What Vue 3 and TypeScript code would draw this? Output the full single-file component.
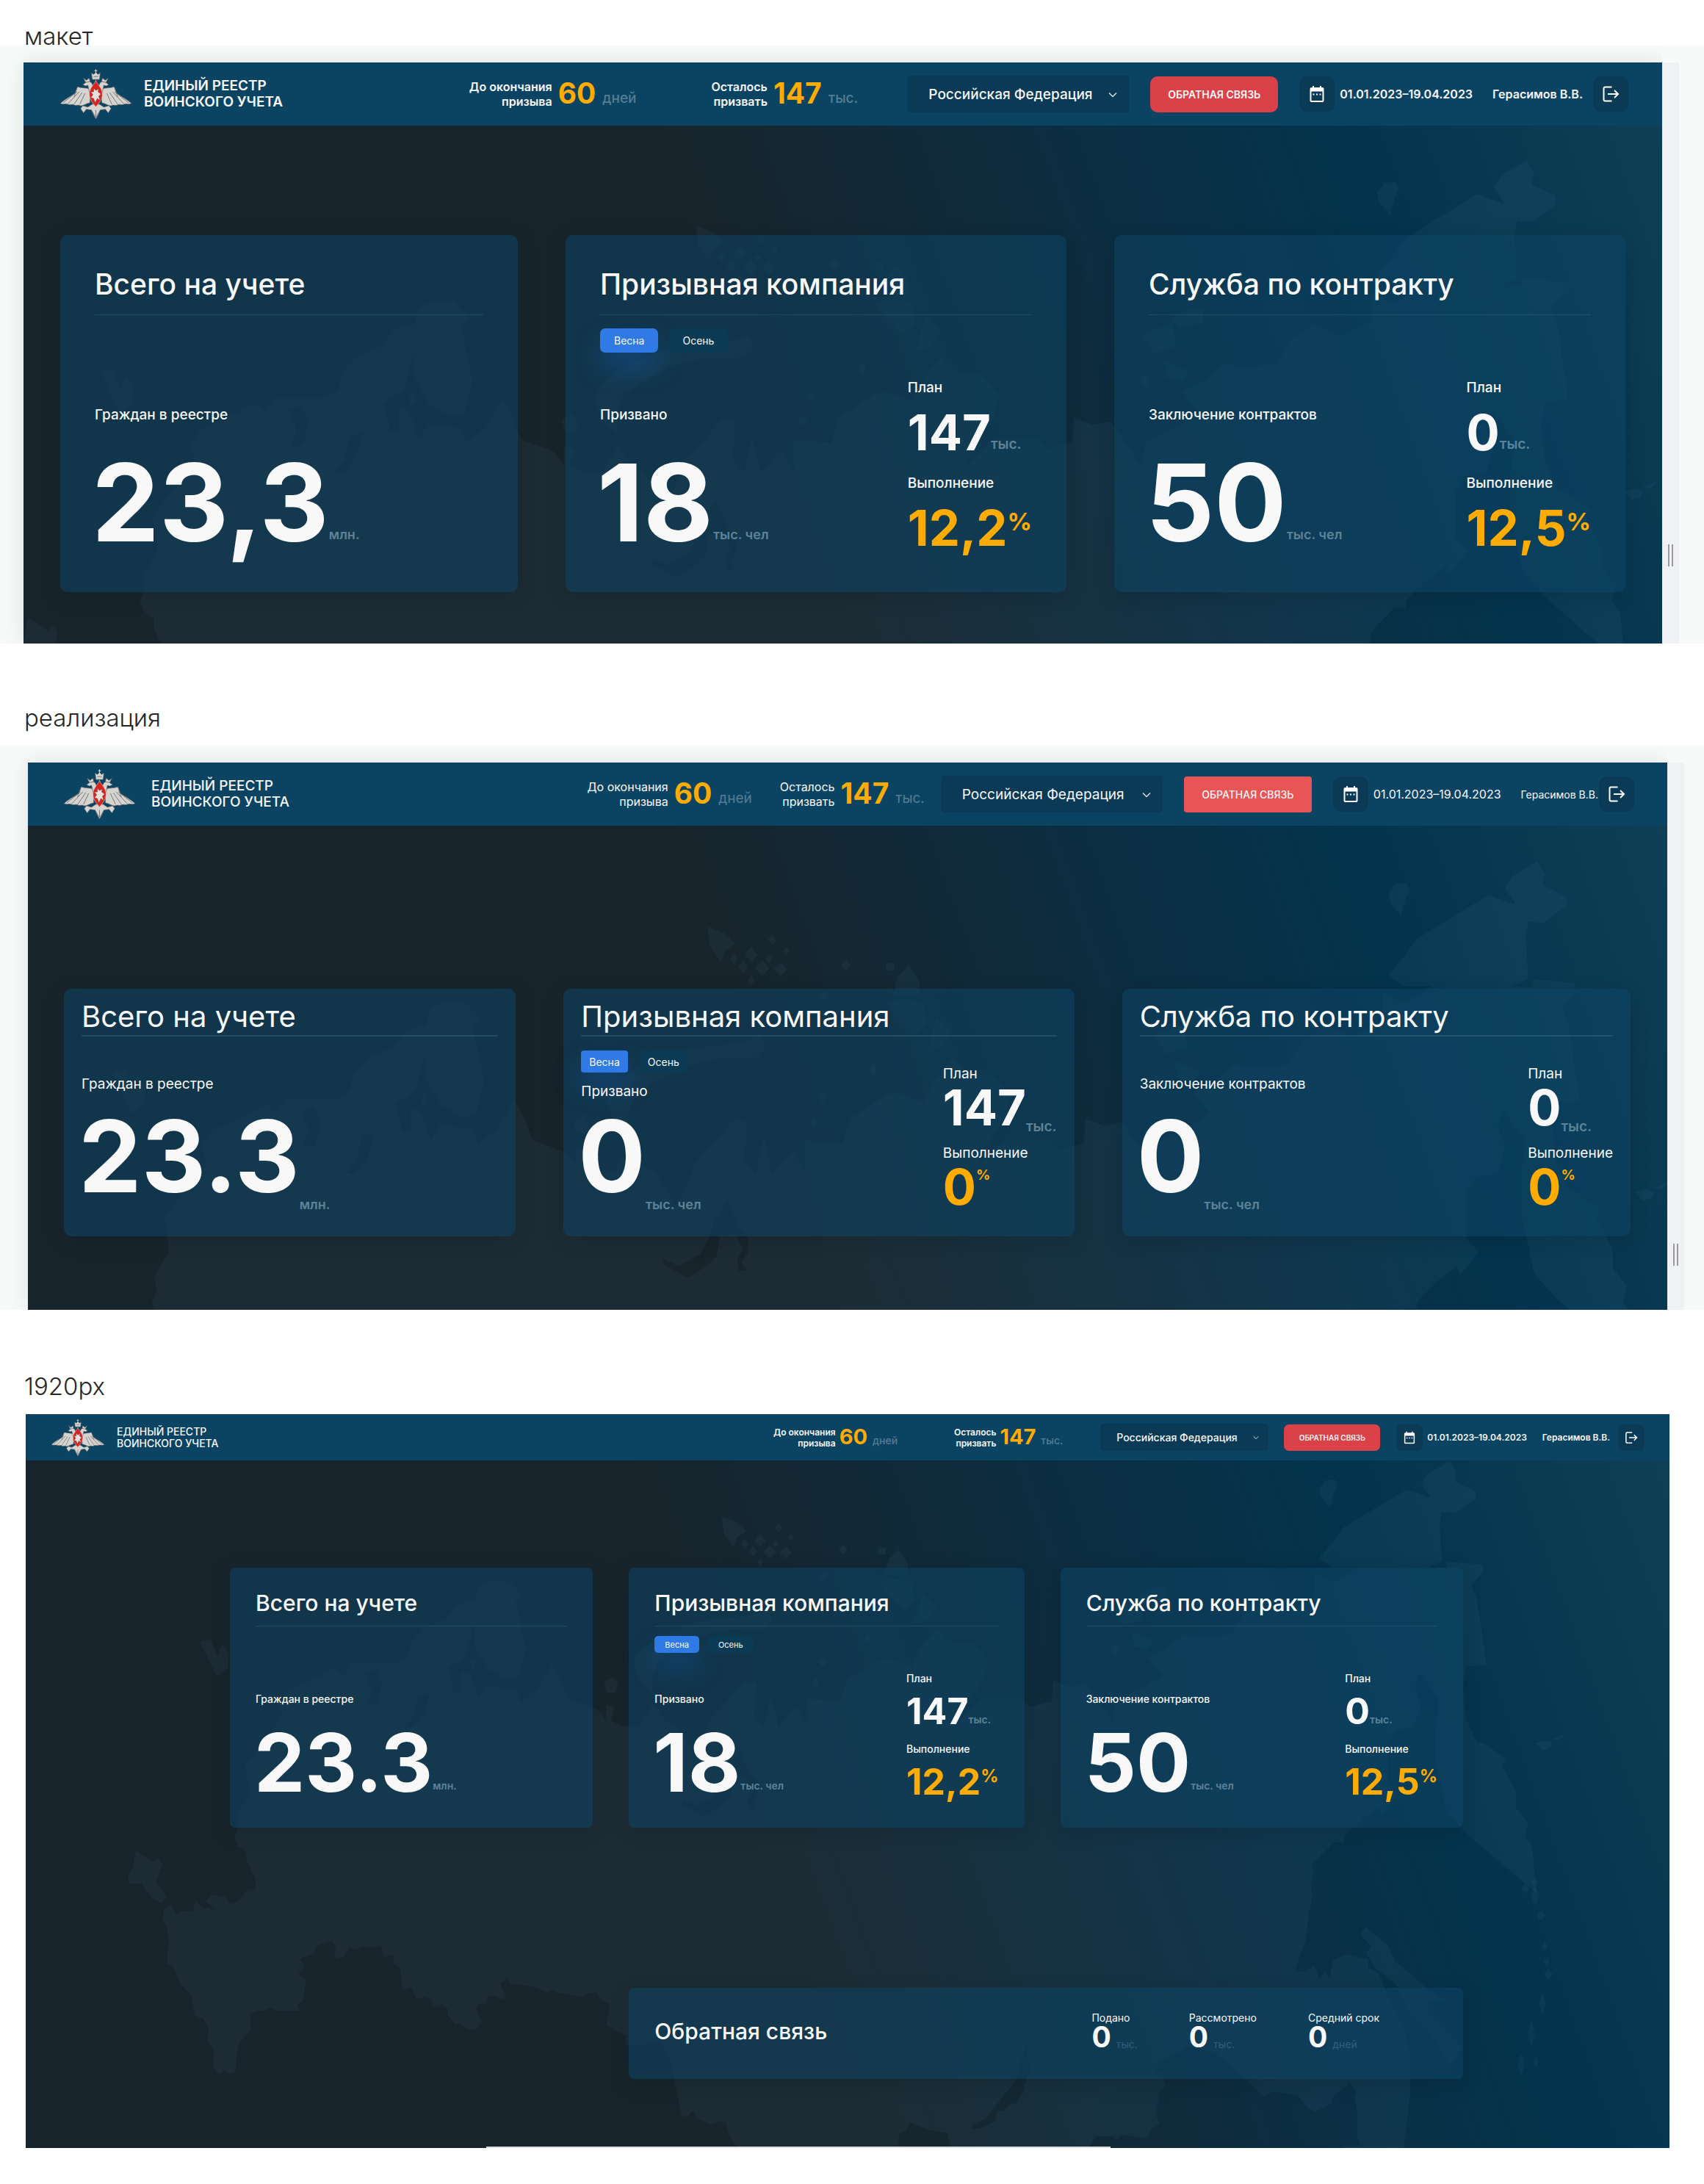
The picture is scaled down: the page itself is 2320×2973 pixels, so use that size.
<script setup lang="ts">
import { ref } from 'vue'

interface Metric { label: string; value: string; unit: string; accent?: boolean }
interface Card { title: string; tabs: boolean; main: Metric; side: Metric[] }
interface Board {
  id: string
  caption: string
  framed: boolean
  mapBox: string
  cards: Card[]
  feedback: Metric[]
}

function makeCards(total: string, drafted: string, contracts: string, done: [string, string]): Card[] {
  return [
    { title: 'Всего на учете', tabs: false, main: { label: 'Граждан в реестре', value: total, unit: 'млн.' }, side: [] },
    {
      title: 'Призывная компания',
      tabs: true,
      main: { label: 'Призвано', value: drafted, unit: 'тыс. чел' },
      side: [
        { label: 'План', value: '147', unit: 'тыс.' },
        { label: 'Выполнение', value: done[0], unit: '%', accent: true },
      ],
    },
    {
      title: 'Служба по контракту',
      tabs: false,
      main: { label: 'Заключение контрактов', value: contracts, unit: 'тыс. чел' },
      side: [
        { label: 'План', value: '0', unit: 'тыс.' },
        { label: 'Выполнение', value: done[1], unit: '%', accent: true },
      ],
    },
  ]
}

const boards: Board[] = [
  { id: 'mockup', caption: 'макет', framed: true, mapBox: '180 1874 1956 675', cards: makeCards('23,3', '18', '50', ['12,2', '12,5']), feedback: [] },
  { id: 'build', caption: 'реализация', framed: true, mapBox: '171 1873 1958 636', cards: makeCards('23.3', '0', '0', ['0', '0']), feedback: [] },
  {
    id: 'wide',
    caption: '1920px',
    framed: false,
    mapBox: '35 1924 2238 1000',
    cards: makeCards('23.3', '18', '50', ['12,2', '12,5']),
    feedback: [
      { label: 'Подано', value: '0', unit: 'тыс.' },
      { label: 'Рассмотрено', value: '0', unit: 'тыс.' },
      { label: 'Средний срок', value: '0', unit: 'дней' },
    ],
  },
]

const counters = [
  { first: 'До окончания', second: 'призыва', value: '60', unit: 'дней' },
  { first: 'Осталось', second: 'призвать', value: '147', unit: 'тыс.' },
]

const seasons = ['Весна', 'Осень']
const season = ref('Весна')

// Mainland outline followed by the inner gulfs and lakes, filled even-odd
const mainland =
  'M298 2824L290 2813 291 2793 283 2778 284 2762 277 2748 265 2743 261 2717 246 2700 235 2676 227 2673 230 2643 227 2622 221 2613 224 2598 232 2592 240 2605 246 2601 262 2602 266 2587 278 2599 283 2596 294 2600 280 2588 288 2579 306 2581 314 2592 323 2588 338 2572 348 2572 348 2557 336 2532 335 2520 324 2512 319 2500 325 2487 322 2470 340 2441 334 2401 365 2362 384 2335 378 2319 391 2300 423 2287 456 2270 468 2280 479 2264 540 2264 556 2254 559 2235 579 2215 605 2205 624 2183 647 2178 651 2159 670 2150 695 2153 712 2172 702 2178 716 2244 706 2283 689 2285 663 2270 647 2241 645 2212 634 2254 611 2270 618 2303 628 2300 628 2274 641 2280 652 2312 663 2294 702 2299 709 2316 731 2299 752 2265 764 2287 774 2312 813 2326 825 2341 825 2319 837 2324 832 2342 848 2349 871 2349 890 2318 903 2339 923 2352 945 2388 955 2371 968 2339 1014 2288 1030 2290 1027 2335 1040 2350 1050 2310 1060 2350 1085 2323 1100 2350 1098 2312 1144 2316 1153 2287 1182 2268 1198 2258 1215 2258 1241 2268 1252 2244 1275 2216 1297 2236 1323 2236 1345 2260 1338 2287 1315 2319 1301 2347 1338 2311 1389 2311 1404 2323 1432 2315 1434 2287 1456 2295 1478 2291 1515 2343 1519 2315 1559 2295 1582 2280 1563 2256 1589 2244 1611 2224 1637 2228 1678 2224 1693 2197 1722 2177 1752 2193 1789 2173 1789 2141 1815 2153 1848 2133 1815 2133 1795 2121 1815 2098 1830 2078 1915 2027 1948 2038 1935 2019 1944 2005 1974 1988 1983 2003 1980 2015 1996 2023 2009 2029 2009 2040 2002 2044 1981 2059 1963 2058 1960 2074 1963 2125 1944 2133 1968 2134 1970 2125 2018 2129 2020 2139 2003 2157 2011 2177 2024 2266 1996 2268 1992 2295 1996 2339 2011 2371 2022 2374 2051 2394 2044 2402 2064 2438 2064 2461 2081 2481 2076 2500 2086 2512 2092 2577 1996 2495 1970 2467 1955 2400 1955 2351 1959 2311 1933 2278 1926 2295 1935 2319 1926 2351 1900 2355 1889 2374 1889 2426 1904 2442 1881 2469 1878 2459 1855 2475 1830 2500 1830 2508 1817 2507 1787 2537 1789 2550 1784 2565 1787 2578 1781 2610 1778 2640 1763 2682 1776 2684 1789 2675 1796 2693 1804 2683 1810 2693 1815 2668 1833 2660 1863 2667 1863 2678 1878 2687 1889 2717 1911 2760 1920 2800 1920 2850 1911 2924 1828 2924 1830 2921 1853 2921 1848 2910 1848 2874 1844 2857 1846 2847 1838 2835 1815 2855 1811 2865 1789 2875 1778 2867 1767 2852 1748 2849 1733 2848 1720 2854 1693 2827 1654 2794 1619 2785 1580 2807 1571 2821 1582 2822 1587 2839 1578 2849 1574 2880 1579 2890 1567 2899 1562 2911 1528 2906 1520 2913 1514 2908 1493 2908 1481 2924 1295 2924 1290 2904 1264 2899 1238 2889 1236 2896 1230 2903 1224 2904 1223 2917 1228 2924 1005 2924 995 2912 988 2890 980 2888 968 2892 948 2883 944 2873 937 2880 928 2881 914 2810 899 2780 866 2785 851 2783 854 2772 840 2765 825 2755 829 2740 830 2727 819 2723 812 2712 803 2713 790 2718 762 2713 752 2709 746 2712 732 2706 714 2702 697 2701 690 2693 681 2700 688 2717 683 2722 673 2716 664 2718 662 2727 651 2728 648 2733 656 2753 646 2764 633 2760 627 2754 620 2755 609 2743 610 2735 601 2728 598 2732 590 2730 588 2722 577 2718 568 2721 559 2705 548 2709 547 2697 544 2677 535 2672 537 2663 531 2661 523 2665 518 2648 507 2651 492 2649 487 2653 475 2652 468 2663 459 2666 455 2660 457 2648 452 2642 436 2647 429 2651 429 2658 408 2666 415 2677 406 2686 417 2695 412 2725 405 2727 408 2737 379 2737 368 2733 359 2737 348 2737 341 2743 341 2763 326 2780 322 2800 321 2819 314 2823 306 2819Z' +
  'M930 2450L949 2458 974 2444 984 2427 991 2405 1007 2382 1020 2414 1031 2425 1031 2442 1023 2454 1030 2463 1020 2464 1018 2451 1025 2437 1015 2420 997 2423 994 2446 981 2459 959 2472 930 2456Z' +
  'M1398 2780L1402 2820 1395 2837 1393 2847 1382 2864 1373 2865 1366 2874 1358 2874 1355 2887 1334 2898 1323 2898 1324 2892 1343 2884 1363 2857 1382 2834 1389 2810Z' +
  'M497 2278L512 2272 520 2290 514 2318 500 2320 506 2300Z M570 2308L585 2304 578 2330 562 2352 552 2350 564 2334Z'

const islands =
  'M1859 2623L1889 2647 1900 2670 1944 2707 1970 2723 1946 2723 1944 2740 1992 2787 1974 2810 1944 2763 1915 2733 1900 2700 1874 2680 1859 2658 1867 2650 1852 2633Z' +
  'M185 2519L209 2534 215 2529 221 2536 213 2562 227 2582 220 2591 207 2583 192 2564 176 2564 174 2552 181 2543Z' +
  'M272 2234L287 2231 296 2254 302 2238 312 2250 310 2271 295 2281Z' +
  'M1024 2198L1046 2192 1052 2205 1040 2217 995 2217 949 2228 916 2247 897 2260 887 2283 889 2305 874 2294 863 2270 865 2251 897 2228 943 2208Z' +
  'M983 2064L1003 2071 1016 2084 1003 2092 999 2105 985 2086Z' +
  'M1196 2106L1206 2106 1206 2115 1196 2115Z M1223 2109L1236 2127 1236 2143 1219 2144 1204 2143 1210 2121Z' +
  'M1197 2153L1215 2147 1241 2153 1245 2177 1230 2190 1206 2168Z M1256 2169L1275 2185 1264 2204 1245 2210Z' +
  'M1571 2161L1589 2157 1588 2177 1559 2181 1549 2172Z M1515 2189L1552 2177 1556 2204 1530 2212Z M1541 2220L1571 2232 1563 2244 1544 2241Z' +
  'M1804 2014L1818 2013 1822 2021 1817 2030 1811 2051 1798 2036 1796 2025Z' +
  'M2090 2372L2103 2369 2113 2372 2111 2379 2100 2382Z M2114 2367L2131 2360 2122 2369Z' +
  'M822 2290L834 2282 842 2292 838 2304 826 2304Z M640 2262L646 2258 648 2268 642 2272Z'

// Islets as centre x, centre y, half width, half height
const islets: number[][] = [
  [1035, 2096, 8, 9], [1060, 2079, 5, 6], [1048, 2112, 9, 9], [1025, 2111, 6, 7], [1070, 2113, 8, 8],
  [1035, 2126, 4, 6], [1014, 2101, 5, 6], [1077, 2092, 4, 5], [1056, 2101, 5, 5], [1148, 2109, 6, 7],
  [1122, 2144, 6, 6], [1181, 2230, 5, 8], [1120, 2262, 5, 7], [1110, 2290, 5, 7], [1519, 2244, 7, 9],
  [2090, 2562, 5, 6], [2077, 2571, 5, 7], [2090, 2580, 6, 13], [2098, 2607, 6, 7], [2103, 2649, 4, 7],
  [2106, 2670, 4, 6], [2108, 2687, 6, 8], [2100, 2727, 5, 15], [2085, 2768, 5, 20], [2071, 2810, 5, 15], [2091, 2806, 4, 7],
]
const islet = ([x, y, w, h]: number[]): string => `${x},${y - h} ${x + w},${y} ${x},${y + h} ${x - w},${y}`
</script>

<template>
  <main class="page">
    <section v-for="board in boards" :key="board.id" class="sheet" :class="board.id">
      <h2 class="caption">{{ board.caption }}</h2>
      <div class="stage" :class="{ framed: board.framed }">
        <div class="board">
          <svg class="map" :viewBox="board.mapBox" preserveAspectRatio="none" aria-hidden="true">
            <path :d="mainland" fill-rule="evenodd" />
            <path :d="islands" />
            <polygon v-for="(item, i) in islets" :key="i" :points="islet(item)" />
          </svg>

          <header class="topbar">
            <a class="brand" href="#">
              <svg class="emblem" viewBox="0 0 100 68" aria-hidden="true">
                <g fill="#d6d4d1" stroke="#55575a" stroke-width=".7" stroke-linejoin="round">
                  <path d="M42 27C36 25 29 26 25 24C23 27 23 30 21 33C16 37 7 41 1 47C5 49 9 47 11 48C14 50 18 47 20 49C23 51 26 48 28 50C32 51 36 47 42 46Z" />
                  <path d="M58 27C64 25 71 26 75 24C77 27 77 30 79 33C84 37 93 41 99 47C95 49 91 47 89 48C86 50 82 47 80 49C77 51 74 48 72 50C68 51 64 47 58 46Z" />
                  <path d="M45 48L39 52 32 50 29 54 33 60 37 55 44 56 47 63 50 68 53 63 56 56 63 55 67 60 71 54 68 50 61 52 55 48Z" />
                  <path d="M47 27L45 20C43 16 38 16 35 19L32 21 36 23 39 22 41 31 44 38Z M53 27L55 20C57 16 62 16 65 19L68 21 64 23 61 22 59 31 56 38Z" />
                  <path d="M44 5L47 7 50 4 53 7 56 5 55 14 45 14Z M33 12L37 15 41 12 42 17 36 18Z M67 12L63 15 59 12 58 17 64 18Z" />
                </g>
                <path d="M50 0V5M48 2H52" stroke="#dedbd8" stroke-width="1" />
                <path d="M5 46L24 31M12 47L27 31M20 48L31 32M28 48L35 33M95 46L76 31M88 47L73 31M80 48L69 32M72 48L65 33M24 26L20 38M76 26L80 38M45 58L49 65M55 58L51 65M50 56V66M47 10H53" fill="none" stroke="#6b6b6c" stroke-width=".9" />
                <path d="M50 15C51 20 59 25 59 34C59 43 53 47 50 52C47 47 41 43 41 34C41 25 49 20 50 15Z" fill="#d8231f" stroke="#f0d9d5" stroke-width=".6" />
                <path d="M47 26L50 29 54 27 53 31 57 34 54 37 56 43 52 40 49 46 47 40 43 39 46 35 43 31 47 31Z" fill="#e6e1df" stroke="#6c302d" stroke-width=".5" />
              </svg>
              <span class="brand-name">ЕДИНЫЙ РЕЕСТР<br />ВОИНСКОГО УЧЕТА</span>
            </a>

            <div class="counters">
              <div v-for="c in counters" :key="c.value" class="counter">
                <span class="counter-label">{{ c.first }}<br />{{ c.second }}</span>
                <strong class="counter-value">{{ c.value }}</strong>
                <span class="counter-unit">{{ c.unit }}</span>
              </div>
            </div>

            <div class="region">
              <select :id="`${board.id}-region`" aria-label="Регион">
                <option>Российская Федерация</option>
              </select>
              <svg viewBox="0 0 12 8" aria-hidden="true"><path d="M1 1.5L6 6.5 11 1.5" /></svg>
            </div>

            <button type="button" class="feedback-btn">ОБРАТНАЯ СВЯЗЬ</button>

            <div class="period">
              <button type="button" class="icon-btn" aria-label="Период">
                <svg viewBox="0 0 24 24" aria-hidden="true">
                  <path fill-rule="evenodd" fill="#fff" d="M6 1H8V3H16V1H18V3H19.500Q21.500 3 21.500 5V21Q21.500 23 19.500 23H4.500Q2.500 23 2.500 21V5Q2.500 3 4.500 3H6ZM4.500 8.500V21H19.500V8.500ZM6.500 11.500H8.500V13.500H6.500ZM11 11.500H13V13.500H11ZM15.500 11.500H17.500V13.500H15.500Z" />
                </svg>
              </button>
              <span>01.01.2023–19.04.2023</span>
            </div>

            <div class="user">
              <span>Герасимов В.В.</span>
              <button type="button" class="icon-btn" aria-label="Выйти">
                <svg viewBox="0 0 24 24" aria-hidden="true">
                  <path d="M13.500 2.500H4.500Q2.500 2.500 2.500 4.500V19.500Q2.500 21.500 4.500 21.500H13.500M8 12H21.500M17 7L22 12 17 17" fill="none" stroke="#fff" stroke-width="2" />
                </svg>
              </button>
            </div>
          </header>

          <div class="cards">
            <article v-for="card in board.cards" :key="card.title" class="card">
              <h3 class="card-title">{{ card.title }}</h3>
              <div class="card-body">
                <div class="primary">
                  <div v-if="card.tabs" class="tabs">
                    <button v-for="s in seasons" :key="s" type="button" class="tab" :class="{ active: season === s }" @click="season = s">{{ s }}</button>
                  </div>
                  <div class="metric main" :class="{ tight: card.tabs }">
                    <span class="label">{{ card.main.label }}</span>
                    <div class="figure">
                      <strong>{{ card.main.value }}</strong>
                      <span class="unit">{{ card.main.unit }}</span>
                    </div>
                  </div>
                </div>
                <div v-if="card.side.length" class="secondary">
                  <div v-for="m in card.side" :key="m.label" class="metric" :class="{ accent: m.accent }">
                    <span class="label">{{ m.label }}</span>
                    <div class="figure">
                      <strong>{{ m.value }}</strong>
                      <span class="unit">{{ m.unit }}</span>
                    </div>
                  </div>
                </div>
              </div>
            </article>

            <article v-if="board.feedback.length" class="card feedback">
              <h3 class="feedback-title">Обратная связь</h3>
              <div class="feedback-stats">
                <div v-for="m in board.feedback" :key="m.label" class="feedback-stat">
                  <span class="label">{{ m.label }}</span>
                  <div class="feedback-figure">
                    <strong>{{ m.value }}</strong>
                    <span>{{ m.unit }}</span>
                  </div>
                </div>
              </div>
            </article>
          </div>
        </div>
        <div v-if="board.framed" class="gutter"><span class="grip"></span></div>
      </div>
    </section>
  </main>
</template>

<style>
body {
  margin: 0;
  background: #fff;
}
</style>

<style scoped>
.page,
.page * {
  box-sizing: border-box;
}
.page {
  padding-bottom: 49px;
  font-family: Inter, "Noto Sans", sans-serif;
  color: #f8f8f8;
}
button,
select {
  margin: 0;
  border: 0;
  font-family: inherit;
  color: inherit;
}
button {
  padding: 0;
  cursor: pointer;
}

.caption {
  margin: 0;
  padding: 87px 0 24px 33px;
  font-size: 33px;
  line-height: 28px;
  font-weight: 300;
  color: #262626;
}
.mockup .caption {
  padding: 36px 0 0 33px;
  line-height: 26px;
}
.wide .caption {
  padding-top: 90px;
}

.stage {
  display: flex;
  padding: 0 47px 0 35px;
}
.stage.framed {
  padding: 23px 34px 0 32px;
  background: #f8faf9;
}
.build .stage.framed {
  padding: 23px 27px 0 38px;
}
.board {
  position: relative;
  flex: 1;
  min-width: 0;
  background: linear-gradient(70deg, #18242b 44%, #0d2d40 65%, #03344e 82%, #104056 100%);
}
.framed .board {
  box-shadow: 0 0 28px rgba(0, 0, 0, 0.1);
  clip-path: inset(-23px 0 0 -38px);
}
.wide .board::after {
  content: "";
  position: absolute;
  left: 28%;
  bottom: 0;
  width: 38%;
  height: 2px;
  background: #d9dde0;
}
.map {
  position: absolute;
  inset: 0;
  width: 100%;
  height: 100%;
  fill: rgba(105, 160, 190, 0.07);
}
.gutter {
  position: relative;
  width: 23px;
  background: #f0f1f4;
}
.grip {
  position: absolute;
  right: 8px;
  bottom: 105px;
  width: 7px;
  height: 30px;
  border: solid #9b9b9d;
  border-width: 0 2px;
}
.build .grip {
  bottom: 60px;
}

/* Top bar */
.topbar {
  position: relative;
  display: flex;
  align-items: center;
  height: 86px;
  padding: 0 46px 0 49px;
  background: #0b4463;
}
.brand {
  display: flex;
  align-items: center;
  gap: 16px;
  margin-right: auto;
  color: inherit;
  text-decoration: none;
}
.emblem {
  width: 99px;
  height: 68px;
}
.brand-name {
  font-size: 19px;
  line-height: 22px;
  font-weight: 600;
}
.counters {
  display: flex;
  gap: 102px;
  margin-right: 67px;
}
.counter {
  display: flex;
  align-items: center;
}
.counter-label {
  font-size: 16px;
  line-height: 20px;
  font-weight: 600;
  text-align: right;
}
.counter-value {
  margin: 0 9px 2px 8px;
  font-size: 39px;
  line-height: 44px;
  font-weight: 700;
  color: #ffab00;
}
.counter-unit {
  padding-top: 12px;
  font-size: 19px;
  line-height: 24px;
  font-weight: 500;
  color: #557d94;
}
.region {
  position: relative;
  width: 302px;
  margin-right: 29px;
}
.region select {
  display: block;
  width: 100%;
  height: 50px;
  padding: 0 50px 0 29px;
  border-radius: 5px;
  background: #0a3a56;
  font-size: 19px;
  font-weight: 500;
  appearance: none;
}
.region svg {
  position: absolute;
  top: 22px;
  right: 16px;
  width: 12px;
  height: 8px;
  fill: none;
  stroke: #d5dfe5;
  stroke-width: 1.5;
  pointer-events: none;
}
.feedback-btn {
  width: 174px;
  height: 49px;
  margin-right: 29px;
  border-radius: 10px;
  background: #db4148;
  font-size: 14px;
  font-weight: 600;
}
.period,
.user {
  display: flex;
  align-items: center;
  font-size: 16px;
  font-weight: 600;
  white-space: nowrap;
}
.period {
  gap: 7px;
  margin-right: 27px;
}
.user {
  gap: 14px;
}
.icon-btn {
  display: grid;
  place-items: center;
  width: 48px;
  height: 48px;
  border-radius: 10px;
  background: #0a3a56;
}
.icon-btn svg {
  width: 24px;
  height: 24px;
}

/* Cards */
.cards {
  position: relative;
  display: grid;
  grid-template-columns: 623fr 682fr 696fr;
  gap: 65px;
  padding: 149px 50px 70px;
}
.card {
  display: flex;
  flex-direction: column;
  padding: 47px 47px 59px;
  border-radius: 10px;
  background: rgba(13, 67, 101, 0.55);
  box-shadow: 0 6px 24px rgba(12, 22, 32, 0.22);
}
.card-title {
  margin: 0;
  padding-bottom: 21px;
  border-bottom: 1px solid rgba(130, 175, 190, 0.18);
  font-size: 39px;
  line-height: 40px;
  font-weight: 500;
}
.card-body {
  display: flex;
  flex: 1;
  justify-content: space-between;
}
.primary {
  display: flex;
  flex-direction: column;
  padding: 18px 0 3px;
}
.tabs {
  display: flex;
  gap: 14px;
}
.tab {
  height: 33px;
  padding: 0 19px;
  border-radius: 7px;
  background: #0b3a54;
  font-size: 14px;
}
.tab.active {
  background: #2f7ae5;
  box-shadow: 0 20px 36px rgba(24, 100, 200, 0.4);
}
.metric {
  display: flex;
  flex-direction: column;
  gap: 21px;
}
.metric.main {
  margin-top: auto;
  gap: 47px;
}
.label {
  font-size: 19px;
  line-height: 24px;
  font-weight: 500;
}
.figure {
  display: flex;
  align-items: flex-end;
}
.figure strong {
  font-size: 67px;
  line-height: 56px;
  font-weight: 700;
}
.unit {
  font-size: 19px;
  line-height: 24px;
  font-weight: 600;
  color: #5d8399;
}
.main .figure strong {
  margin-left: -4px;
  font-size: 146px;
  line-height: 120px;
}
.main .unit {
  margin-bottom: 4px;
  font-size: 18px;
}
.secondary {
  display: flex;
  flex-direction: column;
  gap: 29px;
  padding-top: 87px;
}
.accent .figure {
  align-items: flex-start;
  color: #ffab00;
}
.accent .unit {
  margin-top: 3px;
  font-size: 33px;
  line-height: 32px;
  font-weight: 700;
  color: inherit;
}

/* Built version: tighter cards, lighter text */
.build .topbar {
  padding: 0 45px 0 48px;
}
.build .brand {
  gap: 21px;
}
.build .brand-name {
  font-weight: 500;
}
.build .counters {
  gap: 38px;
  margin-right: 22px;
}
.build .counter-label,
.build .counter-unit,
.build .region select,
.build .period,
.build .user {
  font-weight: 400;
}
.build .user {
  gap: 1px;
  font-size: 14px;
}
.build .feedback-btn {
  border-radius: 4px;
  background: #e95456;
  font-weight: 500;
}
.build .cards {
  grid-template-columns: 615fr 695fr 692fr;
  padding: 222px 50px 100px 49px;
}
.build .card {
  padding: 18px 24px 39px;
}
.build .card-title {
  padding-bottom: 5px;
  border-bottom-width: 2px;
  font-size: 40px;
  font-weight: 400;
}
.build .primary {
  padding: 19px 0 10px;
}
.build .tabs {
  gap: 16px;
}
.build .tab {
  height: 30px;
  padding: 0 11px;
  border-radius: 4px;
}
.build .label {
  font-weight: 400;
}
.build .metric {
  gap: 6px;
}
.build .metric.main {
  gap: 26px;
}
.build .metric.main.tight {
  gap: 16px;
}
.build .main .figure strong {
  font-size: 136px;
}
.build .unit {
  margin-bottom: -10px;
}
.build .main .unit {
  margin-bottom: -18px;
}
.build .accent .unit {
  margin: 0;
  font-size: 19px;
  line-height: 24px;
}
.build .secondary {
  gap: 22px;
  padding-top: 39px;
}

/* 1920px version */
.wide .topbar {
  height: 63px;
  padding: 0 34px;
}
.wide .emblem {
  width: 74px;
  height: 50px;
}
.wide .brand-name {
  font-size: 14px;
  line-height: 16px;
  font-weight: 500;
}
.wide .counters {
  gap: 77px;
  margin-right: 51px;
}
.wide .counter-label {
  font-size: 12px;
  line-height: 15px;
}
.wide .counter-value {
  margin: 0 7px 1px 5px;
  font-size: 29px;
  line-height: 32px;
}
.wide .counter-unit {
  padding-top: 9px;
  font-size: 14px;
  line-height: 18px;
}
.wide .region {
  width: 229px;
  margin-right: 21px;
}
.wide .region select {
  height: 37px;
  padding: 0 40px 0 22px;
  font-size: 14px;
}
.wide .region svg {
  top: 16px;
  right: 13px;
  width: 8px;
  height: 6px;
}
.wide .feedback-btn {
  width: 131px;
  height: 36px;
  margin-right: 22px;
  border-radius: 7px;
  font-size: 10px;
}
.wide .period,
.wide .user {
  font-size: 12px;
}
.wide .period {
  gap: 6px;
  margin-right: 21px;
}
.wide .user {
  gap: 11px;
}
.wide .icon-btn {
  width: 36px;
  height: 36px;
  border-radius: 7px;
}
.wide .icon-btn svg {
  width: 18px;
  height: 18px;
}
.wide .cards {
  grid-template-columns: 494fr 538fr 548fr;
  gap: 218px 49px;
  padding: 146px 281px 94px 278px;
}
.wide .card {
  padding: 33px 35px 42px;
  border-radius: 7px;
}
.wide .card-title {
  padding-bottom: 16px;
  font-size: 30px;
  line-height: 30px;
}
.wide .primary {
  padding: 13px 0 3px;
}
.wide .tabs {
  gap: 12px;
}
.wide .tab {
  height: 23px;
  padding: 0 14px;
  border-radius: 5px;
  font-size: 11px;
}
.wide .label {
  font-size: 14px;
  line-height: 18px;
}
.wide .metric {
  gap: 14px;
}
.wide .metric.main {
  gap: 33px;
}
.wide .figure strong {
  font-size: 50px;
  line-height: 42px;
}
.wide .main .figure strong {
  margin-left: -2px;
  font-size: 110px;
  line-height: 88px;
}
.wide .unit {
  font-size: 14px;
  line-height: 18px;
}
.wide .main .unit {
  margin-bottom: 3px;
  font-size: 14px;
}
.wide .accent .unit {
  margin-top: 2px;
  font-size: 24px;
  line-height: 24px;
}
.wide .secondary {
  gap: 22px;
  padding-top: 62px;
}
.wide .feedback {
  grid-column: 2 / 4;
  flex-direction: row;
  align-items: center;
  justify-content: space-between;
  padding: 33px 114px 39px 35px;
}
.feedback-title {
  margin: 0;
  font-size: 30px;
  line-height: 30px;
  font-weight: 500;
}
.feedback-stats {
  display: flex;
  gap: 70px;
}
.feedback-stat {
  display: flex;
  flex-direction: column;
}
.feedback-stat .label {
  line-height: 16px;
  font-weight: 400;
}
.feedback-figure {
  display: flex;
  align-items: flex-end;
  gap: 7px;
}
.feedback-figure strong {
  font-size: 39px;
  line-height: 36px;
}
.feedback-figure span {
  font-size: 14px;
  line-height: 16px;
  color: #335f7b;
}
</style>
